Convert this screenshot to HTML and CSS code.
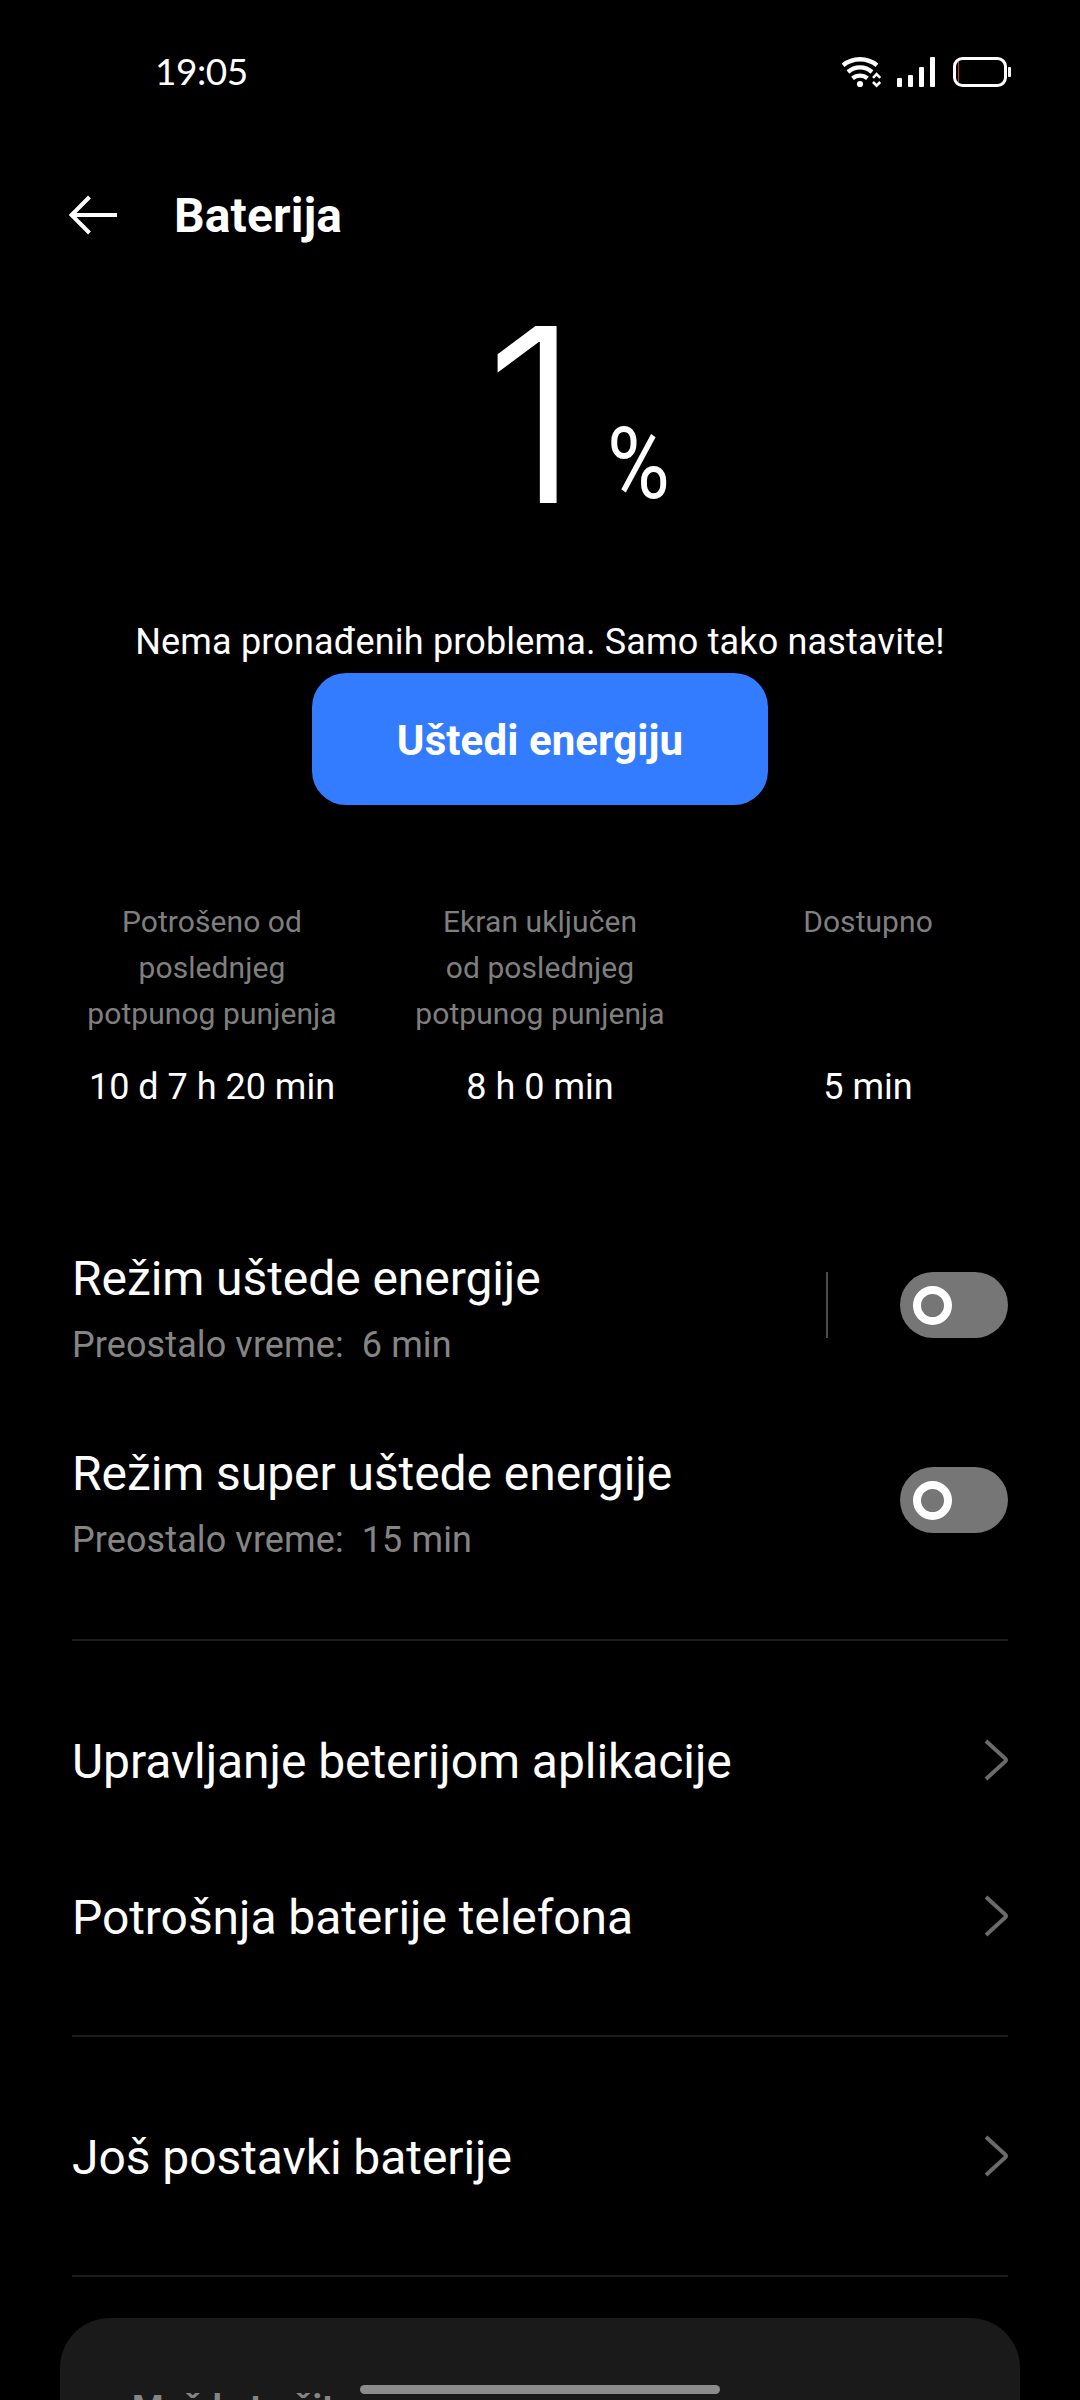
FILE: index.html
```html
<!DOCTYPE html>
<html lang="sr-Latn">
<head>
<meta charset="utf-8">
<title>Baterija</title>
<link rel="stylesheet" href="styles.css">
</head>
<body>
<div class="screen">
  <div class="status">
    <span class="time">19:05</span>
    <svg class="status-icons" width="176" height="44" viewBox="0 0 176 44" fill="none">
      <g stroke="#fff" stroke-width="4.4">
        <path d="M3 15.2A27 27 0 0 1 37 15.2"/>
        <path d="M8 22A18 18 0 0 1 32 22"/>
        <path d="M12.5 28.3A12 12 0 0 1 27.5 28.3"/>
      </g>
      <circle cx="20" cy="34" r="3.1" fill="#fff"/>
      <path d="M33 27.8L36.6 24.2L40.2 27.8M33 32L36.6 35.6L40.2 32" stroke="#fff" stroke-width="2.6"/>
      <g fill="#fff">
        <rect x="57" y="28" width="5" height="9" rx="1"/>
        <rect x="68" y="25" width="5" height="12" rx="1"/>
        <rect x="79" y="17" width="5" height="20" rx="1"/>
        <rect x="90" y="7" width="5" height="30" rx="1"/>
        <rect x="168" y="17" width="3" height="10" rx="1"/>
      </g>
      <rect x="114.5" y="8.5" width="51" height="27" rx="8" stroke="#fff" stroke-width="3"/>
      <path d="M118.5 12V32" stroke="#c0343c" stroke-width="1"/>
    </svg>
  </div>

  <header class="header">
    <svg class="back" width="50" height="42" viewBox="0 0 50 42" fill="none" stroke="#fff" stroke-width="4">
      <path d="M20.5 3L2.5 21L20.5 39M3 21H48"/>
    </svg>
    <h1 class="title">Baterija</h1>
  </header>

  <section class="hero">
    <div class="level"><span class="digit">1</span><span class="percent">%</span></div>
    <p class="message">Nema pronađenih problema. Samo tako nastavite!</p>
    <button class="save">Uštedi energiju</button>
  </section>

  <section class="stats">
    <div class="stat"><div class="label">Potrošeno od<br>poslednjeg<br>potpunog punjenja</div><div class="value">10 d 7 h 20 min</div></div>
    <div class="stat"><div class="label">Ekran uključen<br>od poslednjeg<br>potpunog punjenja</div><div class="value">8 h 0 min</div></div>
    <div class="stat"><div class="label">Dostupno</div><div class="value">5 min</div></div>
  </section>

  <section class="modes">
    <div class="mode">
      <div class="text"><div class="name">Režim uštede energije</div><div class="sub">Preostalo vreme:&nbsp; 6 min</div></div>
      <span class="separator"></span>
      <span class="toggle"><span class="knob"></span></span>
    </div>
    <div class="mode">
      <div class="text"><div class="name">Režim super uštede energije</div><div class="sub">Preostalo vreme:&nbsp; 15 min</div></div>
      <span class="toggle"><span class="knob"></span></span>
    </div>
  </section>

  <nav class="group">
    <div class="link"><span class="name">Upravljanje beterijom aplikacije</span><svg class="chevron" width="24" height="44" viewBox="1 0 24 44"><path d="M3 3L22.3 20.6Q23.7 22 22.3 23.4L3 41"/></svg></div>
    <div class="link"><span class="name">Potrošnja baterije telefona</span><svg class="chevron" width="24" height="44" viewBox="1 0 24 44"><path d="M3 3L22.3 20.6Q23.7 22 22.3 23.4L3 41"/></svg></div>
  </nav>
  <nav class="group group-last">
    <div class="link"><span class="name">Još postavki baterije</span><svg class="chevron" width="24" height="44" viewBox="1 0 24 44"><path d="M3 3L22.3 20.6Q23.7 22 22.3 23.4L3 41"/></svg></div>
  </nav>

  <section class="suggestions"><h2 class="suggestions-title">Možda tražite</h2></section>
  <div class="home-bar"></div>
</div>
</body>
</html>
```

FILE: styles.css
```css
* { box-sizing: border-box; margin: 0; padding: 0; }

body { background: #000; }

.screen {
  position: relative;
  display: flex;
  flex-direction: column;
  width: 1080px;
  height: 2400px;
  overflow: hidden;
  background: #000;
  color: #fff;
  font-family: Roboto, sans-serif;
}

.status {
  display: flex;
  flex: none;
  justify-content: space-between;
  align-items: center;
  height: 144px;
  padding: 0 64px 0 155px;
}
.time { padding-bottom: 2px; font: 37px/44px Lato, sans-serif; letter-spacing: -0.5px; }

.header {
  display: flex;
  flex: none;
  align-items: center;
  gap: 55px;
  height: 142px;
  padding-left: 69px;
}
.title { padding-top: 2px; font-size: 48px; line-height: 56px; font-weight: 700; letter-spacing: 0.15px; }

.hero {
  display: flex;
  flex: none;
  flex-direction: column;
  align-items: center;
  padding-top: 4px;
}
.level {
  display: flex;
  align-items: baseline;
  height: 250px;
  padding-left: 85px;
  line-height: 250px;
}
.digit { font-family: Inter, sans-serif; font-size: 243px; font-weight: 300; }
.percent {
  margin-left: 27px;
  font-size: 101px;
  line-height: 100px;
  transform: translateY(-5px) scaleX(0.85);
  transform-origin: left;
}
.message { margin-top: 81px; font-size: 36px; line-height: 42px; letter-spacing: 0.17px; }
.save {
  width: 456px;
  height: 132px;
  margin-top: 10px;
  padding-top: 3px;
  border: 0;
  border-radius: 34px;
  background: #337bff;
  color: #fff;
  font: 700 42px/48px Roboto, sans-serif;
  letter-spacing: 0.1px;
}

.stats {
  display: grid;
  flex: none;
  grid-template-columns: repeat(3, 1fr);
  height: 308px;
  margin-top: 94px;
  padding: 0 48px;
  text-align: center;
}
.label { height: 138px; color: #7f7f7f; font-size: 30px; line-height: 46px; letter-spacing: 0.07px; }
.value { margin-top: 29px; font-size: 36px; line-height: 42px; }

.modes { flex: none; height: 432px; padding: 0 72px; }
.mode { display: flex; align-items: flex-start; height: 195px; padding-top: 44px; }
.text { flex: 1; }
.name { font-size: 48px; line-height: 56px; letter-spacing: -0.07px; }
.sub { margin-top: 17px; color: #858585; font-size: 36px; line-height: 42px; letter-spacing: 0.1px; }
.separator { width: 2px; height: 66px; margin: 21px 72px 0 0; background: #4d4d4d; }
.toggle {
  display: flex;
  align-items: center;
  width: 108px;
  height: 66px;
  margin-top: 21px;
  padding-left: 13px;
  border-radius: 33px;
  background: #767676;
}
.knob { width: 39px; height: 39px; border: 8px solid #fff; border-radius: 50%; }

.group { flex: none; margin: 0 72px; padding: 41px 0; border-top: 2px solid #1b1b1b; }
.group-last { margin-bottom: 41px; border-bottom: 2px solid #1b1b1b; }
.link { display: flex; justify-content: space-between; align-items: center; height: 156px; }
.link .name { padding-top: 3px; }
.chevron { fill: none; stroke: #6b6b6b; stroke-width: 4; }

.suggestions {
  flex: none;
  height: 240px;
  margin: 0 60px;
  padding: 70px 72px;
  border-radius: 50px;
  background: #1a1a1a;
}
.suggestions-title { color: #858585; font-size: 36px; line-height: 42px; font-weight: 700; }

.home-bar {
  position: absolute;
  left: 360px;
  top: 2385px;
  width: 360px;
  height: 9px;
  border-radius: 5px;
  background: #8c8c8c;
}
```
